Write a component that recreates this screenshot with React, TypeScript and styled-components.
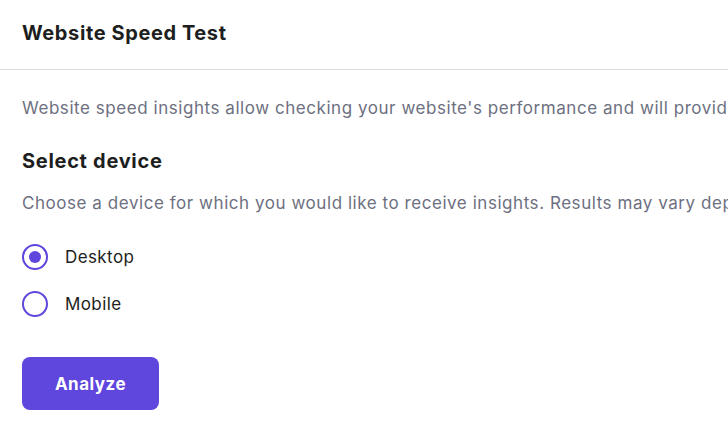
import { useState } from 'react';
import styled, { createGlobalStyle } from 'styled-components';

const GlobalStyle = createGlobalStyle`
  body {
    margin: 0;
    background: #ffffff;
    font-family: Inter, 'Noto Sans', sans-serif;
    color: #1d1e20;
    overflow: hidden;
  }
`;

const devices = ['Desktop', 'Mobile'];

export default function App() {
  const [device, setDevice] = useState<string>('Desktop');

  return (
    <>
      <GlobalStyle />
      <Card>
        <Header>
          <Title>Website Speed Test</Title>
        </Header>
        <Body>
          <Description>
            Website speed insights allow checking your website's performance and will provide
            suggestions on how to improve it.
          </Description>
          <SectionTitle>Select device</SectionTitle>
          <Description>
            Choose a device for which you would like to receive insights. Results may vary depending on
            the device.
          </Description>
          <RadioList>
            {devices.map((d) => (
              <RadioRow key={d} onClick={() => setDevice(d)}>
                <RadioCircle checked={device === d} />
                <RadioLabel>{d}</RadioLabel>
              </RadioRow>
            ))}
          </RadioList>
          <Button type='button'>Analyze</Button>
        </Body>
      </Card>
    </>
  );
}

const Card = styled.div`
  width: 1300px;
`;

const Header = styled.div`
  height: 70px;
  padding: 0 22px;
  display: flex;
  align-items: center;
  border-bottom: 1px solid #dadce0;
  box-sizing: border-box;
`;

const Title = styled.h2`
  margin: 0 0 4px;
  font-size: 20px;
  font-weight: 700;
  letter-spacing: 0.6px;
  color: #1d1e20;
`;

const Body = styled.div`
  padding: 26px 22px;
  display: flex;
  flex-direction: column;
  align-items: flex-start;
`;

const Description = styled.p`
  margin: 0;
  font-size: 17px;
  line-height: 24px;
  letter-spacing: 0.55px;
  color: #6d7081;
  white-space: nowrap;
`;

const SectionTitle = styled.h3`
  margin: 29px 0 18px;
  font-size: 20px;
  line-height: 24px;
  font-weight: 700;
  letter-spacing: 0.7px;
  color: #1d1e20;
`;

const RadioList = styled.div`
  margin-top: 29px;
  display: flex;
  flex-direction: column;
  gap: 21px;
`;

const RadioRow = styled.label`
  display: flex;
  align-items: center;
  gap: 17px;
  cursor: pointer;
`;

const RadioCircle = styled.span<{ checked: boolean }>`
  width: 26px;
  height: 26px;
  box-sizing: border-box;
  border-radius: 50%;
  border: 2px solid #5f46dc;
  display: flex;
  align-items: center;
  justify-content: center;

  &::after {
    content: '';
    width: 12px;
    height: 12px;
    border-radius: 50%;
    background: #5f46dc;
    display: ${(p) => (p.checked ? 'block' : 'none')};
  }
`;

const RadioLabel = styled.span`
  font-size: 17px;
  letter-spacing: 0.4px;
  color: #1d1e20;
`;

const Button = styled.button`
  margin-top: 40px;
  width: 137px;
  height: 53px;
  border: none;
  border-radius: 8px;
  background-color: #5f46dc;
  color: white;
  font-family: inherit;
  font-size: 17px;
  font-weight: 700;
  letter-spacing: 0.5px;
  cursor: pointer;
`;
